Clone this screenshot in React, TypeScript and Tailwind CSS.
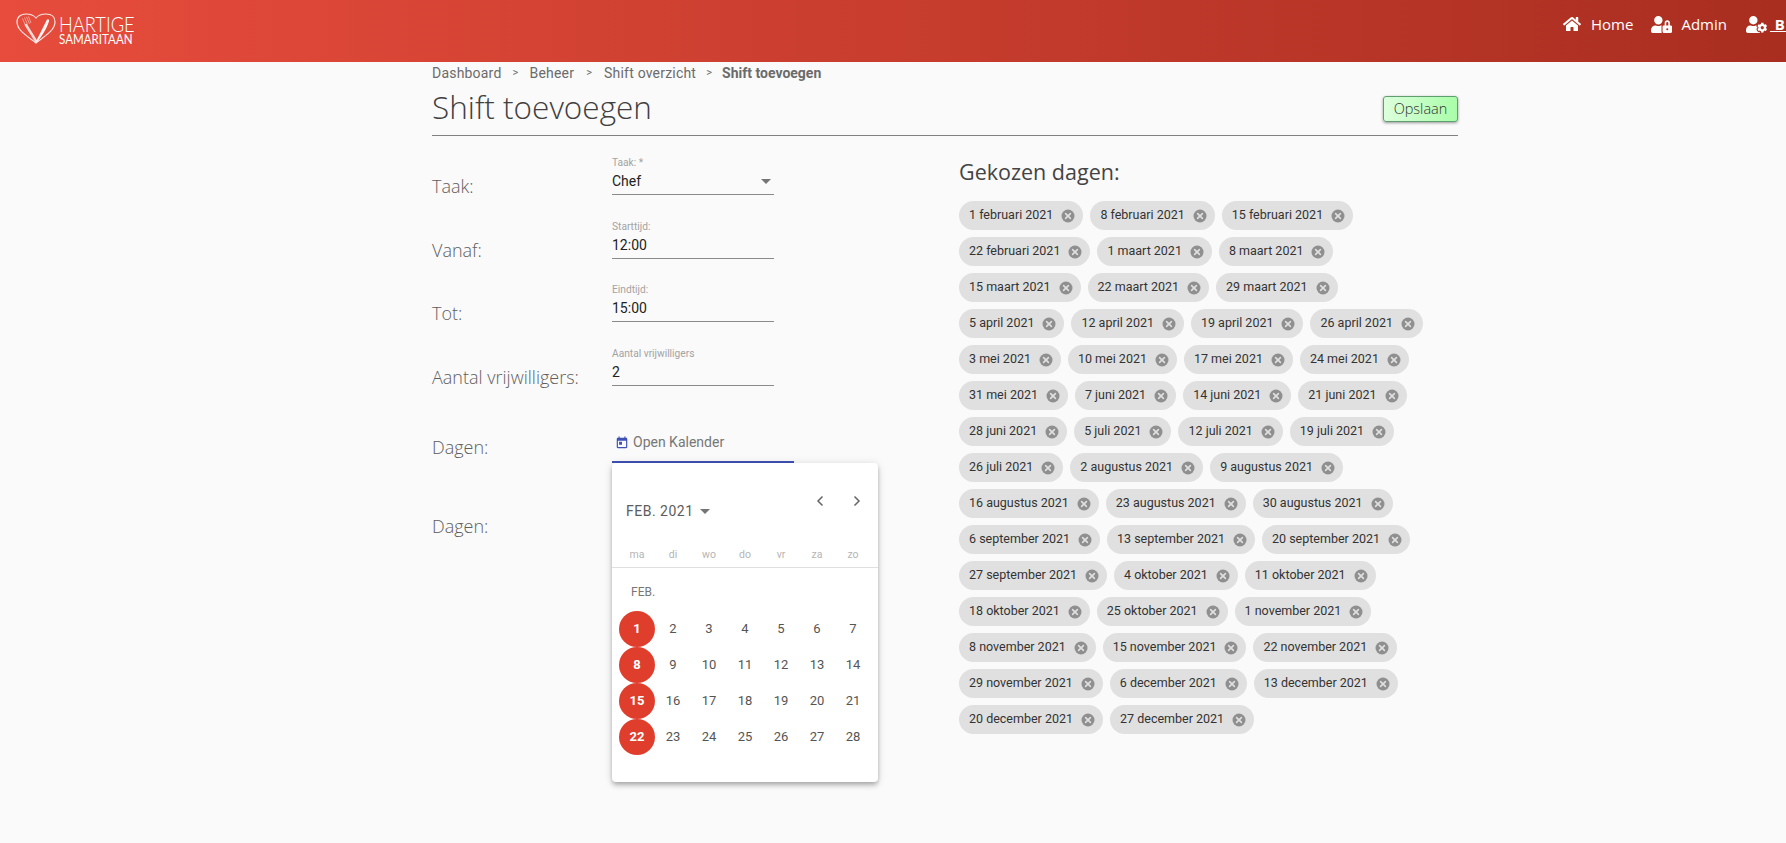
import { FaHome, FaUserLock, FaUserCog } from "react-icons/fa";

const sans = "font-['Open_Sans','Liberation_Sans',sans-serif]";

const rows: string[][] = [
  ["1 februari 2021", "8 februari 2021", "15 februari 2021"],
  ["22 februari 2021", "1 maart 2021", "8 maart 2021"],
  ["15 maart 2021", "22 maart 2021", "29 maart 2021"],
  ["5 april 2021", "12 april 2021", "19 april 2021", "26 april 2021"],
  ["3 mei 2021", "10 mei 2021", "17 mei 2021", "24 mei 2021"],
  ["31 mei 2021", "7 juni 2021", "14 juni 2021", "21 juni 2021"],
  ["28 juni 2021", "5 juli 2021", "12 juli 2021", "19 juli 2021"],
  ["26 juli 2021", "2 augustus 2021", "9 augustus 2021"],
  ["16 augustus 2021", "23 augustus 2021", "30 augustus 2021"],
  ["6 september 2021", "13 september 2021", "20 september 2021"],
  ["27 september 2021", "4 oktober 2021", "11 oktober 2021"],
  ["18 oktober 2021", "25 oktober 2021", "1 november 2021"],
  ["8 november 2021", "15 november 2021", "22 november 2021"],
  ["29 november 2021", "6 december 2021", "13 december 2021"],
  ["20 december 2021", "27 december 2021"],
];

function Chip({ label }: { label: string }) {
  return (
    <div className="flex h-[29px] items-center rounded-full bg-[#e0e0e0] pl-[10px] pr-[8px] gap-[8px]">
      <span className="font-['Roboto',sans-serif] text-[12.5px] text-[#333] whitespace-nowrap">{label}</span>
      <svg width="14" height="14" viewBox="0 0 14 14" className="shrink-0">
        <circle cx="7" cy="7" r="6.5" fill="#8f8f8f" />
        <path d="M4.6 4.6l4.8 4.8M9.4 4.6l-4.8 4.8" stroke="#e0e0e0" strokeWidth="1.6" strokeLinecap="round" />
      </svg>
    </div>
  );
}

function Field({ label, value, caret }: { label: string; value: string; caret?: boolean }) {
  return (
    <div className="w-[162px] h-[40px] pt-[1px] border-b border-[#8a8a8a] font-['Roboto',sans-serif] relative">
      <div className="text-[10.2px] leading-[14px] text-[#a3a3a3] whitespace-nowrap">{label}</div>
      <div className="text-[14px] leading-[22px] text-[#222]">{value}</div>
      {caret && <div className="absolute right-[3px] top-[24px] w-0 h-0 border-x-[5px] border-x-transparent border-t-[5px] border-t-[#757575]" />}
    </div>
  );
}

function FormRow({ label, children }: { label: string; children: React.ReactNode }) {
  return (
    <div className="flex h-[63.5px]">
      <div className={`w-[180px] pt-[19px] text-[18px] leading-[24px] font-light text-[#5f5f5f] ${sans}`}>{label}</div>
      {children}
    </div>
  );
}

function Logo() {
  return (
    <div className="flex items-center gap-[3px] text-white mb-[5px]">
      <svg width="40" height="32" viewBox="0 0 40 32" fill="none" className="shrink-0">
        <path d="M20 30C13 24 1 18 1 9 1 3.5 5 1 10 1c4 0 8 1.5 10 4 2-2.5 6-4 10-4 5 0 9 2.5 9 8 0 9-12 15-19 21Z" stroke="#fff" strokeOpacity="0.85" strokeWidth="1.2" />
        <path d="M10 12l10 16" stroke="#fff" strokeOpacity="0.8" strokeWidth="2.5" strokeLinecap="round" />
        <path d="M6.5 5.5l3 7M8.5 4.5l3 7M10.5 3.8l3 7M12.5 3.5l2.5 6.5" stroke="#fff" strokeOpacity="0.6" strokeWidth="0.8" />
        <path d="M20 28.5L31 6.5c1.5-.8 2.5.2 2 1.8C31 15 26 23 21.5 28.5Z" fill="#fff" fillOpacity="0.95" />
      </svg>
      <div className="font-['Lato',sans-serif] font-light mt-[3px]">
        <div className="text-[21px] leading-[18px] origin-left scale-x-[0.87]">HARTIGE</div>
        <div className="text-[13px] leading-[13px] font-normal origin-left scale-x-[0.89]">SAMARITAAN</div>
      </div>
    </div>
  );
}

const days = ["ma", "di", "wo", "do", "vr", "za", "zo"];

function Calendar() {
  const cells = Array.from({ length: 28 }, (_, i) => i + 1);
  return (
    <div className="absolute left-0 top-[54px] z-10 w-[266px] h-[319px] rounded-[4px] bg-white shadow-[0_2px_4px_-1px_rgba(0,0,0,0.2),0_4px_5px_0_rgba(0,0,0,0.14),0_1px_10px_0_rgba(0,0,0,0.12)] font-['Roboto',sans-serif]">
      <div className="flex h-[75px] justify-between pl-[14px] pr-[9px]">
        <div className="flex items-center gap-[6px] h-[20px] mt-[38px] text-[14px] leading-[20px] text-[#5c5c5c] tracking-[0.5px]">
          FEB. 2021
          <div className="w-0 h-0 border-x-[5px] border-x-transparent border-t-[5px] border-t-[#757575]" />
        </div>
        <div className="flex gap-[13px] mt-[26px] h-[24px] text-[#666]">
          <svg width="24" height="24" viewBox="0 0 24 24" fill="none" stroke="currentColor" strokeWidth="1.5"><path d="M14.5 7.5L10 12l4.5 4.5" /></svg>
          <svg width="24" height="24" viewBox="0 0 24 24" fill="none" stroke="currentColor" strokeWidth="1.5"><path d="M9.5 7.5L14 12l-4.5 4.5" /></svg>
        </div>
      </div>
      <div className="grid grid-cols-[repeat(7,36px)] pl-[7px] h-[30px] pt-[4px] items-center border-b border-[#e0e0e0] text-[10.5px] text-[#b5b5b5] text-center">
        {days.map((d) => <div key={d}>{d}</div>)}
      </div>
      <div className="h-[43px] pl-[19px] pt-[14px] text-[12px] leading-[20px] text-[#777]">FEB.</div>
      <div className="grid grid-cols-[repeat(7,36px)] auto-rows-[36px] pl-[7px] text-[13px] text-[#555]">
        {cells.map((n) => (
          <div key={n} className="flex items-center justify-center">
            {n % 7 === 1 ? (
              <div className="flex h-[36px] w-[36px] items-center justify-center rounded-full bg-[#e03e2d] font-bold text-white">{n}</div>
            ) : n}
          </div>
        ))}
      </div>
    </div>
  );
}

export default function App() {
  return (
    <div className="w-[1786px] h-[843px] overflow-hidden bg-[#fafafa]">
      <header className="flex h-[62px] items-center justify-between bg-gradient-to-r from-[#e74c3c] to-[#a92e20] pl-[16px] overflow-hidden">
        <Logo />
        <nav className={`flex w-[223px] shrink-0 items-center text-[15px] text-white whitespace-nowrap mb-[14px] ${sans}`}>
          <FaHome className="shrink-0 text-[18px] mr-[10px]" />
          <span className="mr-[18px]">Home</span>
          <FaUserLock className="shrink-0 text-[21px] mr-[9px]" />
          <span className="mr-[19px]">Admin</span>
          <FaUserCog className="shrink-0 text-[21px] mr-[3px]" />
          <span className="font-bold underline tracking-[1px]">&nbsp;B</span>
        </nav>
      </header>
      <main className="ml-[432px] w-[1026px]">
        <div className="flex h-[22px] items-center font-['Roboto',sans-serif] text-[14px] tracking-[0.2px] text-[#6b6b6b] whitespace-nowrap">
          <span>Dashboard</span>
          <span className="mx-[11px] text-[11px]">&gt;</span>
          <span>Beheer</span>
          <span className="mx-[12px] text-[11px]">&gt;</span>
          <span>Shift overzicht</span>
          <span className="mx-[10px] text-[11px]">&gt;</span>
          <span className="font-bold tracking-normal">Shift toevoegen</span>
        </div>
        <div className="flex h-[52px] items-center justify-between border-b border-[#808080]">
          <h1 className={`text-[31.5px] font-light text-[#404040] leading-[46px] pb-[6px] ${sans}`}>Shift toevoegen</h1>
          <button className={`h-[26px] w-[75px] mb-[2px] rounded-[3px] border border-[#5f9f6f] bg-gradient-to-r from-[#dcffdc] to-[#a9fda9] text-[14.5px] font-light text-[#333] shadow-[0_1px_3px_rgba(0,0,0,0.4)] ${sans}`}>Opslaan</button>
        </div>
        <div className="flex">
          <div className="w-[527px] pt-[19px]">
            <FormRow label="Taak:"><Field label="Taak: *" value="Chef" caret /></FormRow>
            <FormRow label="Vanaf:"><Field label="Starttijd:" value="12:00" /></FormRow>
            <FormRow label="Tot:"><Field label="Eindtijd:" value="15:00" /></FormRow>
            <FormRow label="Aantal vrijwilligers:"><Field label="Aantal vrijwilligers" value="2" /></FormRow>
            <div className="flex h-[77.5px]">
              <div className={`w-[180px] pt-[26px] text-[18px] leading-[24px] font-light text-[#5f5f5f] ${sans}`}>Dagen:</div>
              <div className="relative">
                <div className="flex h-[54px] w-[182px] items-end gap-[4px] border-b-2 border-[#3f51b5] pl-[3px] pb-[9px] font-['Roboto',sans-serif] text-[14px] leading-[20px] text-[#777]">
                  <svg width="14" height="14" viewBox="0 0 24 24" fill="#3f51b5" className="mb-[2px]">
                    <path d="M19 3h-1V1h-2v2H8V1H6v2H5c-1.11 0-1.99.9-1.99 2L3 19c0 1.1.89 2 2 2h14c1.1 0 2-.9 2-2V5c0-1.1-.9-2-2-2zm0 16H5V8h14v11zM7 10h5v5H7z" />
                  </svg>
                  Open Kalender
                </div>
                <Calendar />
              </div>
            </div>
            <div className="flex h-[80px]">
              <div className={`w-[180px] pt-[27px] text-[18px] leading-[24px] font-light text-[#5f5f5f] ${sans}`}>Dagen:</div>
            </div>
          </div>
          <div className="flex-1 pt-[22px]">
            <h2 className={`text-[21.5px] leading-[28px] font-normal text-[#444] mb-[15px] ${sans}`}>Gekozen dagen:</h2>
            <div className="flex flex-col gap-[7px]">
              {rows.map((r) => (
                <div key={r[0]} className="flex gap-[7px]">
                  {r.map((c) => <Chip key={c} label={c} />)}
                </div>
              ))}
            </div>
          </div>
        </div>
      </main>
    </div>
  );
}
